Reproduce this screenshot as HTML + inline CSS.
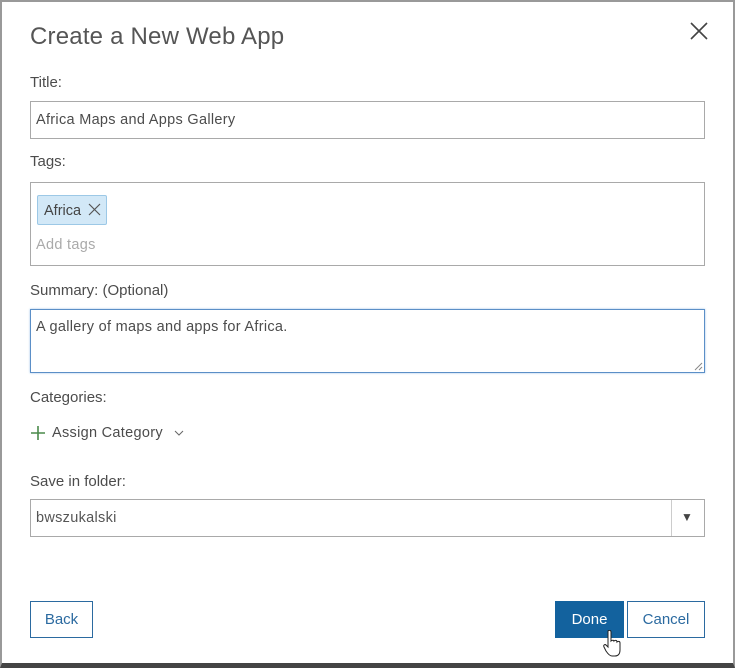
<!DOCTYPE html>
<html><head><style>
*{box-sizing:border-box;margin:0;padding:0}
body{width:735px;height:668px;background:#fff;font-family:"Liberation Sans",sans-serif;color:#4c4c4c;position:relative;overflow:hidden}
.frame{position:absolute;left:0;top:0;width:735px;height:668px;border:2px solid #999;border-bottom:5px solid #444;border-right:2px solid #999}
.a{position:absolute}
.lbl{font-size:15px;color:#4c4c4c}
.t{font-size:14.5px;letter-spacing:0.3px}
.box{border:1px solid #a9a9a9;background:#fff}
.btn{position:absolute;height:37px;border:1px solid #2b6aa0;color:#2b6aa0;font-size:15px;display:flex;align-items:center;justify-content:center;background:#fff}
</style></head><body>
<div class="frame"></div>
<div class="a" style="left:30px;top:23px;font-size:24px;color:#555;letter-spacing:0.2px">Create a New Web App</div>
<svg class="a" style="left:689px;top:21px" width="20" height="20"><path d="M2 2L18 18M18 2L2 18" stroke="#444" stroke-width="1.6"/></svg>
<div class="a lbl" style="left:30px;top:74px">Title:</div>
<div class="a box" style="left:30px;top:101px;width:675px;height:38px"></div>
<div class="a t" style="left:36px;top:112px;color:#4c4c4c">Africa Maps and Apps Gallery</div>
<div class="a lbl" style="left:30px;top:153px">Tags:</div>
<div class="a box" style="left:30px;top:182px;width:675px;height:84px"></div>
<div class="a" style="left:37px;top:195px;width:70px;height:30px;background:#d2e8f7;border:1px solid #9cc8e6;border-radius:2px;font-size:14.5px;color:#444;padding:7px 0 0 6px">Africa</div>
<svg class="a" style="left:88px;top:203px" width="13" height="13"><path d="M1 1L12 12M12 1L1 12" stroke="#555" stroke-width="1.2"/></svg>
<div class="a t" style="left:36px;top:237px;color:#aaa">Add tags</div>
<div class="a lbl" style="left:30px;top:282px">Summary: (Optional)</div>
<div class="a" style="left:30px;top:309px;width:675px;height:64px;border:1px solid #5b8fc7;box-shadow:0 0 2px #9cc0e6"></div>
<div class="a t" style="left:36px;top:319px;color:#4c4c4c">A gallery of maps and apps for Africa.</div>
<svg class="a" style="left:694px;top:362px" width="9" height="9"><path d="M8 1L1 8M8 5L5 8" stroke="#888"/></svg>
<div class="a lbl" style="left:30px;top:389px">Categories:</div>
<svg class="a" style="left:31px;top:426px" width="14" height="14"><path d="M7 0V14M0 7H14" stroke="#4a8a4a" stroke-width="1.6"/></svg>
<div class="a t" style="left:52px;top:425px;color:#4c4c4c">Assign Category</div>
<svg class="a" style="left:174px;top:430px" width="10" height="7"><path d="M1 1L5 5L9 1" stroke="#666" fill="none"/></svg>
<div class="a lbl" style="left:30px;top:473px">Save in folder:</div>
<div class="a box" style="left:30px;top:499px;width:675px;height:38px"></div>
<div class="a" style="left:671px;top:500px;width:1px;height:36px;background:#ccc"></div>
<div class="a t" style="left:36px;top:510px;color:#555">bwszukalski</div>
<div class="a" style="left:681px;top:510px;font-size:12px;color:#444">▼</div>
<div class="btn" style="left:30px;top:601px;width:63px">Back</div>
<div class="btn" style="left:555px;top:601px;width:69px;background:#13629e;color:#fff;border-color:#13629e">Done</div>
<div class="btn" style="left:627px;top:601px;width:78px">Cancel</div>
<svg class="a" style="left:603px;top:630px" width="20" height="28"><path d="M5 1C6 0 8 0 8 2V11C9 10 11 10 11 11C12 10 14 10 14 12C15 11 17 11 17 13V20C17 24 15 26 12 26H9C7 26 5 24 3 21L1 17C0 15 2 14 3 15L5 17V2Z" fill="#fff" stroke="#222" stroke-width="1"/></svg>
</body></html>
